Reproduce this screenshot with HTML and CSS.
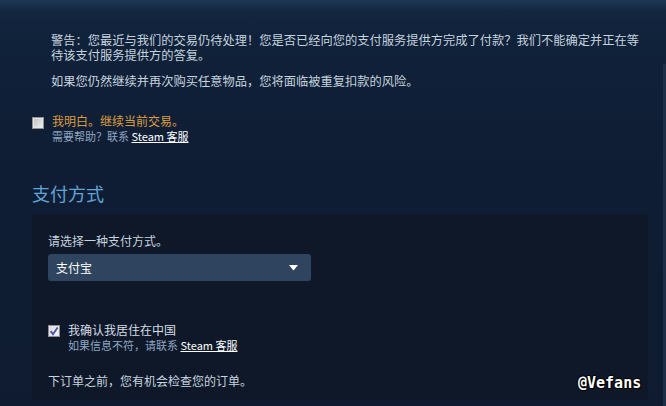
FILE: index.html
```
<!DOCTYPE html>
<html lang="zh-CN">
<head>
<meta charset="utf-8">
<link rel="stylesheet" href="styles.css">
</head>
<body>
<div class="page">
  <div class="warning">
    <p>警告：您最近与我们的交易仍待处理！您是否已经向您的支付服务提供方完成了付款？我们不能确定并正在等待该支付服务提供方的答复。</p>
    <p class="second">如果您仍然继续并再次购买任意物品，您将面临被重复扣款的风险。</p>
  </div>

  <div class="ack">
    <span class="checkbox"></span>
    <div class="ack-text">
      <div class="ack-label">我明白。继续当前交易。</div>
      <div class="sub">需要帮助？联系 <a class="link">Steam 客服</a></div>
    </div>
  </div>

  <h2 class="heading">支付方式</h2>

  <div class="panel">
    <div class="prompt">请选择一种支付方式。</div>
    <div class="select">
      <span>支付宝</span>
      <svg class="arrow" width="9" height="6" viewBox="0 0 9 6"><path d="M0 0H9L4.5 5.5Z" fill="#ffffff"/></svg>
    </div>

    <div class="confirm">
      <span class="checkbox checked">
        <svg width="10" height="10" viewBox="0 0 10 10"><path d="M1.5 5.2L4 8.2L8.6 1.4" fill="none" stroke="#4a55a8" stroke-width="1.8"/></svg>
      </span>
      <div class="confirm-text">
        <div class="confirm-label">我确认我居住在中国</div>
        <div class="sub">如果信息不符，请联系 <a class="link">Steam 客服</a></div>
      </div>
    </div>

    <div class="note">下订单之前，您有机会检查您的订单。</div>
  </div>
</div>
<div class="edge"></div>
<div class="watermark">@Vefans</div>
</body>
</html>
```

FILE: styles.css
```
html, body {
  margin: 0;
  padding: 0;
  height: 100%;
  overflow: hidden;
}
body {
  background: linear-gradient(180deg, #1d3755 0px, #13253f 12px, #10213a 40px, #0f1e35 140px, #0e1b30 406px);
  font-family: "Noto Sans CJK SC", "Liberation Sans", sans-serif;
  font-size: 12px;
  color: #c6d4df;
  position: relative;
}
.page {
  padding-left: 32px;
  width: 616px;
}
.warning {
  padding-top: 33px;
  padding-left: 19px;
  width: 594px;
  font-size: 12.25px;
  line-height: 15px;
}
.warning p {
  margin: 0;
}
.warning .second {
  margin-top: 11px;
}
.ack {
  display: flex;
  align-items: flex-start;
  margin-top: 25px;
  gap: 8px;
}
.checkbox {
  width: 10px;
  height: 10px;
  border: 1px solid #8f8f8f;
  background: linear-gradient(135deg, #bdbdbd, #f4f4f4);
  box-shadow: inset 0 0 0 1px #e6e6e6;
  display: flex;
  align-items: center;
  justify-content: center;
  flex: none;
}
.ack .checkbox {
  margin-top: 3px;
}
.checkbox.checked {
  background: linear-gradient(135deg, #d8d8e0, #f6f6f8);
}
.ack-label {
  color: #dc9d3e;
  line-height: 14px;
}
.sub {
  font-size: 11px;
  line-height: 12px;
  margin-top: 2px;
  color: #8fa6c1;
}
.link {
  color: #ffffff;
  text-decoration: underline;
}
.heading {
  margin: 40px 0 0 0;
  font-size: 18px;
  line-height: 22px;
  font-weight: normal;
  color: #62a3d8;
}
.panel {
  margin-top: 10px;
  background: #0e1829;
  padding: 19px 16px 12px 16px;
}
.prompt {
  line-height: 15px;
}
.select {
  margin-top: 6px;
  width: 242px;
  height: 27px;
  background: #2f445e;
  border-radius: 3px;
  display: flex;
  align-items: center;
  justify-content: space-between;
  padding: 0 13px 0 8px;
  color: #ffffff;
}
.arrow {
  margin-top: 1px;
}
.confirm {
  display: flex;
  align-items: flex-start;
  gap: 8px;
  margin-top: 42px;
}
.confirm .checkbox {
  margin-top: 2px;
}
.confirm-label {
  line-height: 14px;
  color: #d6dee6;
}
.note {
  margin-top: 22px;
  line-height: 15px;
}
.edge {
  position: absolute;
  right: 0;
  top: 64px;
  width: 3px;
  bottom: 0;
  background: #1c2e48;
}
.watermark {
  position: absolute;
  left: 578px;
  top: 374px;
  font-family: "DejaVu Sans Mono", monospace;
  font-weight: bold;
  font-size: 15px;
  color: #ffffff;
  text-shadow: 1px 0 0 #000, -1px 0 0 #000, 0 1px 0 #000, 0 -1px 0 #000, 1px 1px 0 #000;
}
```
